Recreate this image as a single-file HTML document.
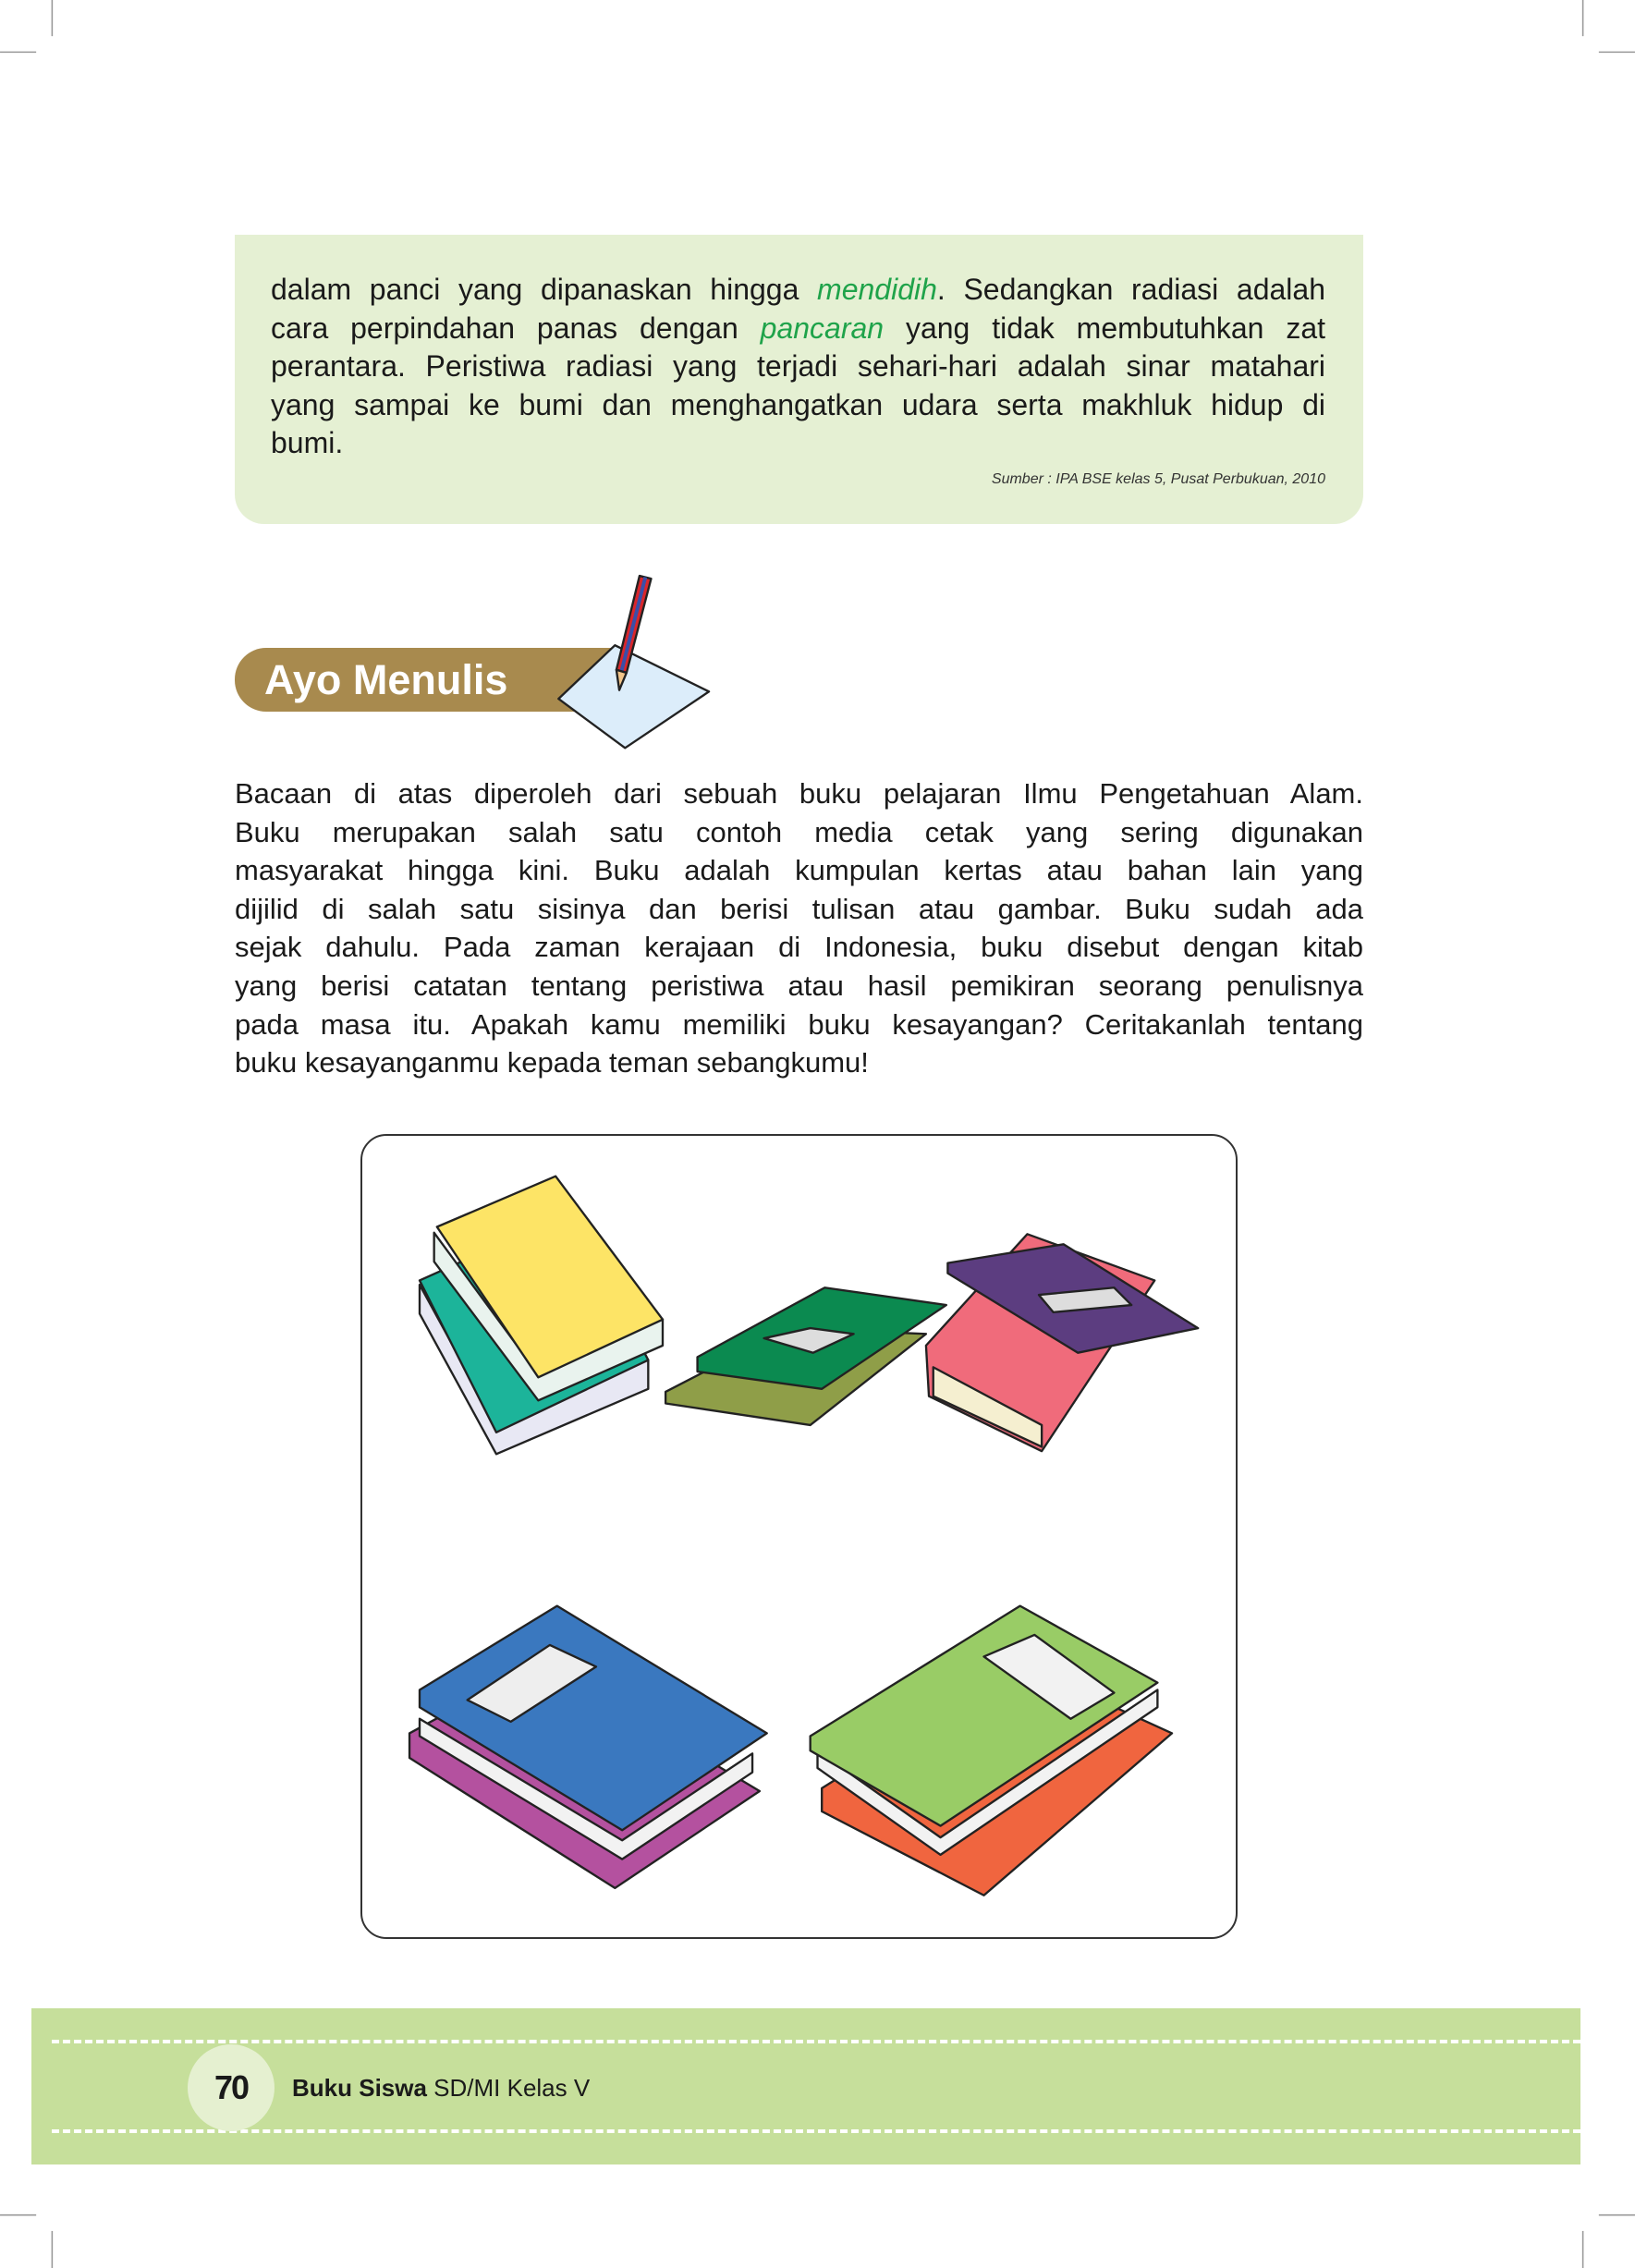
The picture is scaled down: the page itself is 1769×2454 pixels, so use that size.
<!DOCTYPE html>
<html><head><meta charset="utf-8"><style>
*{margin:0;padding:0;box-sizing:border-box}
body{width:1769px;height:2454px;position:relative;background:#fff;font-family:"Liberation Sans",sans-serif;color:#1a1a1a;overflow:hidden}
.box{position:absolute;left:254px;top:254px;width:1221px;height:313px;background:#e5f0d3;border-radius:0 0 32px 32px}
.ln{position:absolute;white-space:nowrap;text-align:justify;text-align-last:justify;height:42px;line-height:42px}
.g{color:#1fa34a;font-style:italic}
.pill{position:absolute;left:254px;top:701px;width:420px;height:69px;background:#a88a4e;border-radius:34px 0 0 34px;color:#fff;font-weight:bold;font-size:45px;line-height:69px;padding-left:32px}
.frame{position:absolute;left:390px;top:1227px;width:949px;height:871px;border:2px solid #333;border-radius:28px}
.foot{position:absolute;left:34px;top:2173px;width:1676px;height:169px;background:#c6df9b}
.dash{position:absolute;left:56px;width:1654px;border-top:4px dashed #fff}
</style></head><body>
<div class="box"></div>
<div style="font-size:32px">
<div class="ln" style="left:293px;top:292px;width:1141px">dalam panci yang dipanaskan hingga <span class="g">mendidih</span>. Sedangkan radiasi adalah</div>
<div class="ln" style="left:293px;top:334px;width:1141px">cara perpindahan panas dengan <span class="g">pancaran</span> yang tidak membutuhkan zat</div>
<div class="ln" style="left:293px;top:375px;width:1141px">perantara. Peristiwa radiasi yang terjadi sehari-hari adalah sinar matahari</div>
<div class="ln" style="left:293px;top:417px;width:1141px">yang sampai ke bumi dan menghangatkan udara serta makhluk hidup di</div>
<div class="ln" style="left:293px;top:458px;text-align-last:left">bumi.</div>
</div>
<div style="position:absolute;right:335px;top:510px;font-size:16px;font-style:italic;color:#333">Sumber : IPA BSE kelas 5, Pusat Perbukuan, 2010</div>
<div class="pill">Ayo Menulis</div>
<div style="font-size:31px">
<div class="ln" style="left:254px;top:838px;width:1221px">Bacaan di atas diperoleh dari sebuah buku pelajaran Ilmu Pengetahuan Alam.</div>
<div class="ln" style="left:254px;top:880px;width:1221px">Buku merupakan salah satu contoh media cetak yang sering digunakan</div>
<div class="ln" style="left:254px;top:921px;width:1221px">masyarakat hingga kini. Buku adalah kumpulan kertas atau bahan lain yang</div>
<div class="ln" style="left:254px;top:963px;width:1221px">dijilid di salah satu sisinya dan berisi tulisan atau gambar. Buku sudah ada</div>
<div class="ln" style="left:254px;top:1004px;width:1221px">sejak dahulu. Pada zaman kerajaan di Indonesia, buku disebut dengan kitab</div>
<div class="ln" style="left:254px;top:1046px;width:1221px">yang berisi catatan tentang peristiwa atau hasil pemikiran seorang penulisnya</div>
<div class="ln" style="left:254px;top:1088px;width:1221px">pada masa itu. Apakah kamu memiliki buku kesayangan? Ceritakanlah tentang</div>
<div class="ln" style="left:254px;top:1129px;text-align-last:left">buku kesayanganmu kepada teman sebangkumu!</div>
</div>
<div class="frame"></div>
<div class="foot"></div>
<div class="dash" style="top:2207px"></div>
<div class="dash" style="top:2304px"></div>
<div style="position:absolute;left:203px;top:2212px;width:94px;height:94px;border-radius:50%;background:#e5f0d0"></div>
<div style="position:absolute;left:203px;top:2212px;width:94px;line-height:94px;text-align:center;font-weight:bold;font-size:36px;letter-spacing:-2px">70</div>
<div style="position:absolute;left:316px;top:2243px;font-size:26px;line-height:32px"><b>Buku Siswa</b> SD/MI Kelas V</div>
<svg style="position:absolute;left:0;top:0" width="1769" height="2454" viewBox="0 0 1130 1567.6">
<g stroke="#999" stroke-width="1"><line x1="36" y1="0" x2="36" y2="25"/><line x1="0" y1="36" x2="25" y2="36"/><line x1="1094" y1="0" x2="1094" y2="25"/><line x1="1105" y1="36" x2="1130" y2="36"/><line x1="0" y1="1531" x2="25" y2="1531"/><line x1="1105" y1="1531" x2="1130" y2="1531"/><line x1="36" y1="1542" x2="36" y2="1568"/><line x1="1094" y1="1542" x2="1094" y2="1568"/></g>
<g stroke="#222" stroke-width="1.5" stroke-linejoin="round">
<polygon points="386,483 425,446 490,478 432,517" fill="#dcedfa"/>
<polygon points="442,398 450,400 433,465 426,463" fill="#d9262b"/>
<line x1="446" y1="399" x2="429.5" y2="464" stroke="#3a4fa8" stroke-width="2.5"/>
<polygon points="426,463 433,465 428,477" fill="#f2c58a"/>
<!-- teal -->
<polygon points="290,888 290,908 343,1005 448,960 448,940 343,985" fill="#e8e8f4"/>
<polygon points="290,885 395,838 448,940 343,990" fill="#1cb49a"/>
<!-- yellow -->
<polygon points="300,852 300,872 372,968 458,930 458,912 372,950" fill="#e9f3ee"/>
<polygon points="302,848 384,813 458,912 372,952" fill="#fde466"/>
<!-- olive + green -->
<polygon points="460,962 545,918 640,922 560,985 460,970" fill="#8f9e48"/>
<polygon points="482,938 570,890 654,902 568,960 482,948" fill="#0b8a50"/>
<polygon points="528,925 560,918 590,922 562,935" fill="#ddd"/>
<!-- pink + purple -->
<polygon points="640,930 710,853 798,885 720,1003 642,965" fill="#f06b7b"/>
<polygon points="645,945 720,985 720,1000 645,965" fill="#f5efd0"/>
<polygon points="655,873 735,860 828,918 745,935 655,880" fill="#5c3d80"/>
<polygon points="718,895 770,890 782,902 728,907" fill="#ddd"/>
<!-- magenta + blue -->
<polygon points="283,1198 375,1148 525,1238 425,1305 283,1215" fill="#b4519f"/>
<polygon points="290,1200 430,1285 520,1225 520,1212 430,1272 290,1188" fill="#f2f2f2"/>
<polygon points="290,1168 385,1110 530,1198 430,1265 290,1180" fill="#3a78bf"/>
<polygon points="323,1175 380,1137 412,1152 353,1190" fill="#eee"/>
<!-- orange + green -->
<polygon points="568,1236 705,1150 810,1198 680,1310 568,1252" fill="#f0653f"/>
<polygon points="565,1222 650,1282 800,1180 800,1168 650,1270 565,1210" fill="#f2f2f2"/>
<polygon points="560,1200 705,1110 800,1163 650,1262 560,1210" fill="#99cc66"/>
<polygon points="680,1145 715,1130 770,1170 740,1188" fill="#f2f2f2"/>
</g>
</svg>
</body></html>
